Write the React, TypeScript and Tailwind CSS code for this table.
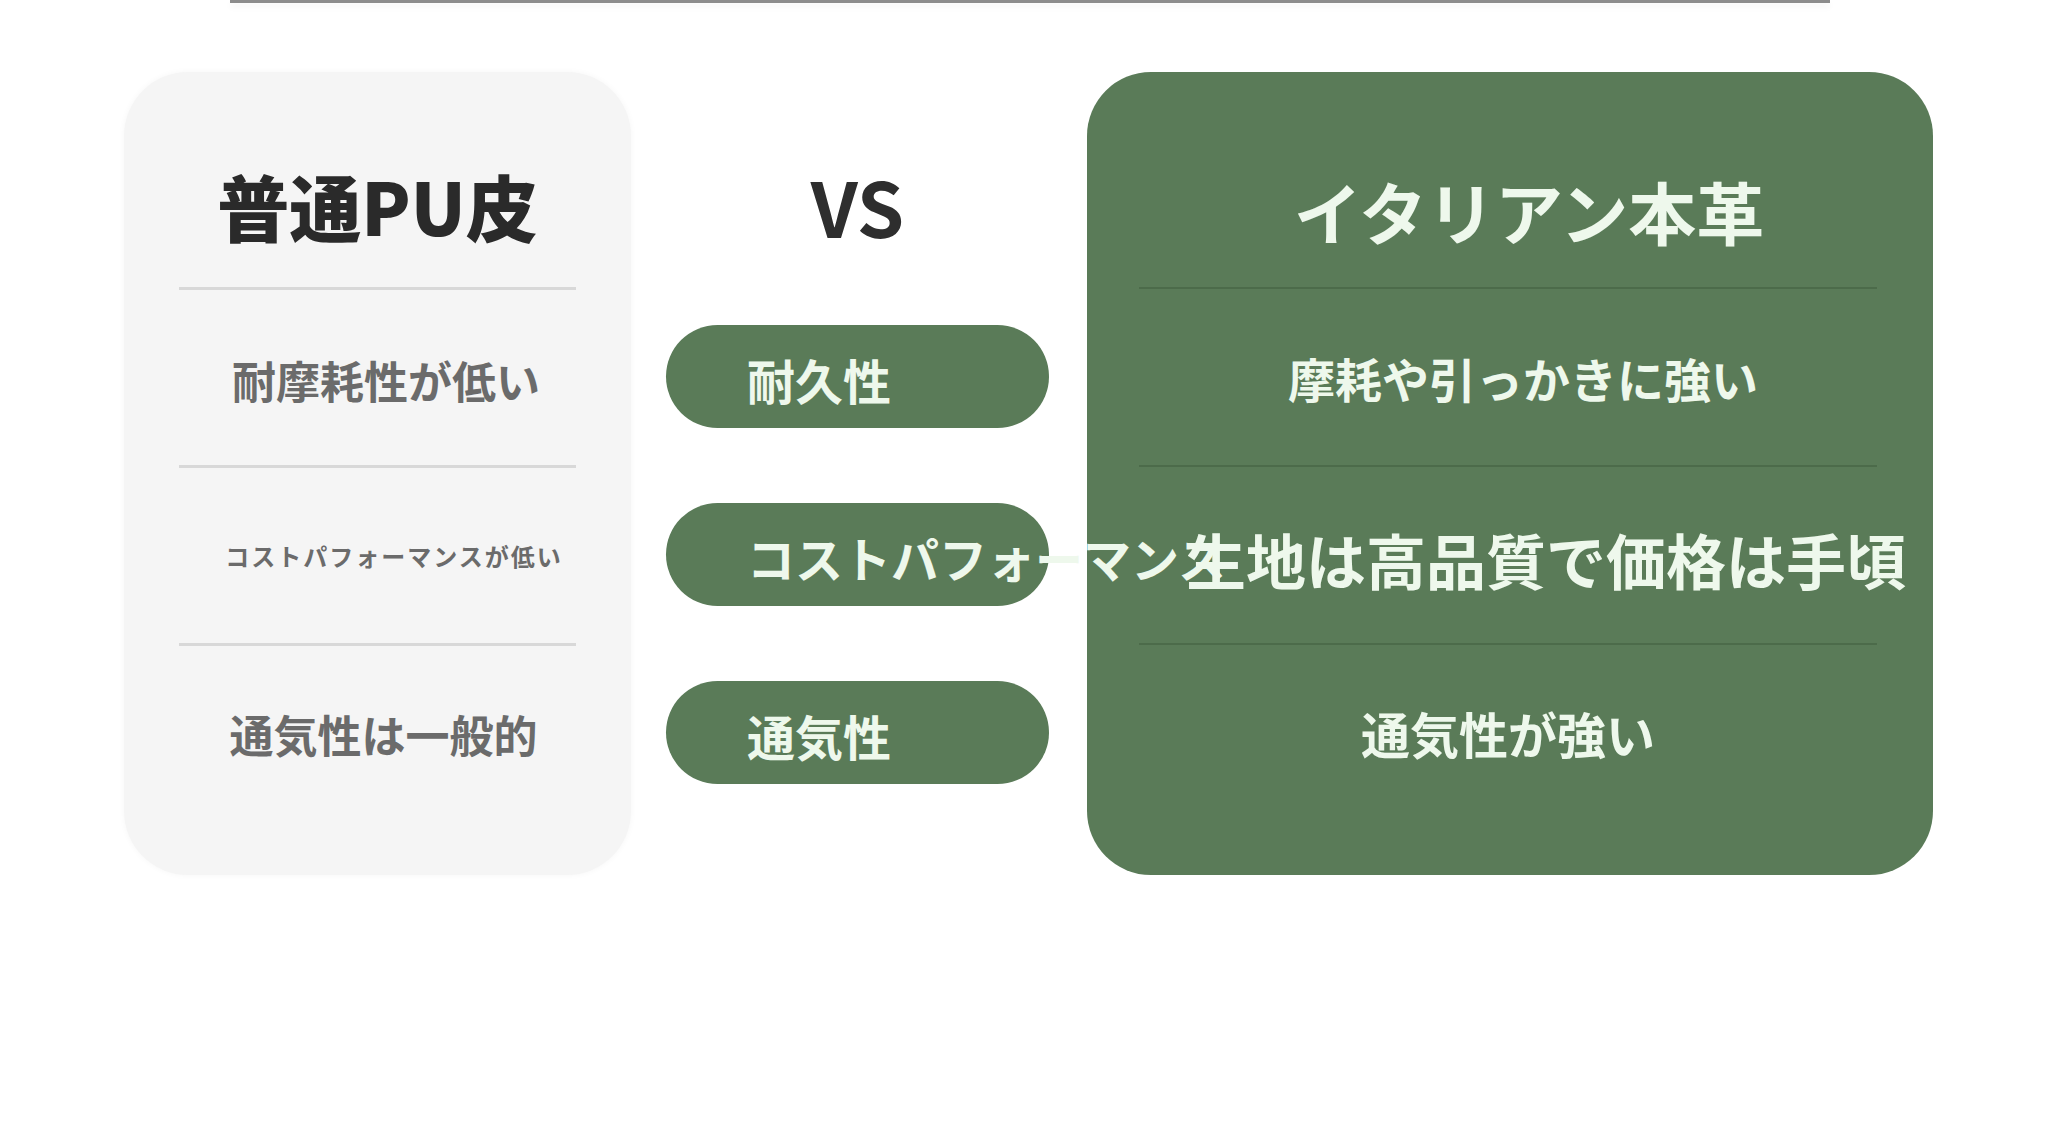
import React from 'react';

const font = { fontFamily: '"Noto Sans CJK JP", "Noto Sans", sans-serif' };

const rows = 'grid grid-cols-1 grid-rows-[215px_178px_178px_178px]';

const App = () => {
  return (
    <div className="w-[2048px] h-[1123px] bg-white overflow-hidden font-['Noto_Sans_CJK_JP',sans-serif]" style={font}>
      <div className="ml-[230px] w-[1600px] h-[3px] bg-[#8c8c8c] shadow-[0_4px_6px_rgba(0,0,0,0.06)]" />

      <div className="flex pt-[69px] pl-[124px]">
        {/* 普通PU皮 */}
        <div className={`${rows} w-[507px] h-[803px] rounded-[64px] bg-[#f5f5f5] shadow-[0_0_6px_rgba(0,0,0,0.04)]`}>
          <div className="flex items-center justify-center pt-[50px] text-[72px] font-black leading-none text-[#2a2a2a]">
            普通PU皮
          </div>
          <div className="min-w-0 mx-[55px] border-t-[3px] border-[#d8d8d8] flex items-center justify-center pl-[17px] pt-[4px] text-[44px] font-bold text-[#6b6b6b]">
            耐摩耗性が低い
          </div>
          <div className="min-w-0 mx-[55px] border-t-[3px] border-[#d8d8d8] flex items-center justify-center pl-[33px] text-[24px] tracking-[2px] font-bold text-[#6b6b6b] whitespace-nowrap">
            コストパフォーマンスが低い
          </div>
          <div className="min-w-0 mx-[55px] border-t-[3px] border-[#d8d8d8] flex items-center justify-center pl-[12px] text-[44px] font-bold text-[#6b6b6b]">
            通気性は一般的
          </div>
        </div>

        {/* VS column */}
        <div className={`${rows} shrink-0 ml-[35px] w-[383px] h-[803px]`}>
          <div className="flex items-center justify-center pt-[50px] text-[76px] font-bold leading-none text-[#2e2e2e]">
            VS
          </div>
          {['耐久性', 'コストパフォーマンス', '通気性'].map((label) => (
            <div key={label} className="min-w-0 flex items-center">
              <div className="relative z-10 flex items-center w-[383px] h-[103px] rounded-full bg-[#5a7b58] pl-[81px] pt-[6px] text-[48px] font-bold leading-none text-[#eef8ec] whitespace-nowrap">
                {label}
              </div>
            </div>
          ))}
        </div>

        {/* イタリアン本革 */}
        <div className={`${rows} shrink-0 ml-[38px] w-[846px] h-[803px] rounded-[64px] bg-[#5a7b58]`}>
          <div className="flex items-center justify-center pt-[62px] pl-[38px] text-[68px] font-bold leading-none text-[#eef8ec]">
            イタリアン本革
          </div>
          <div className="min-w-0 ml-[52px] mr-[56px] border-t-2 border-[#4c6b4a] flex items-center justify-center pl-[30px] pt-[2px] text-[47px] font-bold text-[#eef8ec] whitespace-nowrap">
            摩耗や引っかきに強い
          </div>
          <div className="min-w-0 ml-[52px] mr-[56px] border-t-2 border-[#4c6b4a] flex items-center justify-center pl-[76px] pt-[8px] text-[60px] font-bold text-[#eef8ec] whitespace-nowrap">
            生地は高品質で価格は手頃
          </div>
          <div className="min-w-0 ml-[52px] mr-[56px] border-t-2 border-[#4c6b4a] flex items-center justify-center text-[49px] font-bold text-[#eef8ec]">
            通気性が強い
          </div>
        </div>
      </div>
    </div>
  );
};

export default App;
